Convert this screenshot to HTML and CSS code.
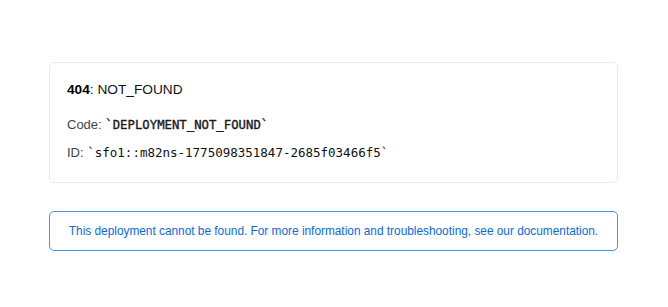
FILE: index.html
```html
<!DOCTYPE html>
<html lang="en">
<head>
<meta charset="utf-8">
<title>404: NOT_FOUND</title>
<link rel="stylesheet" href="styles.css">
</head>
<body>
<main class="page">
  <section class="error-card">
    <p class="title"><strong>404</strong>: NOT_FOUND</p>
    <p class="detail">Code: <code class="code">`DEPLOYMENT_NOT_FOUND`</code></p>
    <p class="detail">ID: <code class="id">`sfo1::m82ns-1775098351847-2685f03466f5`</code></p>
  </section>
  <a class="notice" href="#">This deployment cannot be found. For more information and troubleshooting, see our documentation.</a>
</main>
</body>
</html>
```

FILE: styles.css
```css
html, body {
  margin: 0;
  padding: 0;
  background: #ffffff;
}
body {
  font-family: "Liberation Sans", Arial, sans-serif;
  color: #333;
}
.page {
  display: flex;
  flex-direction: column;
  gap: 28px;
  padding: 62px 50px 0 49px;
}
.error-card {
  border: 1px solid #eaeaea;
  border-radius: 5px;
  padding: 18px 17px 15px;
  display: flex;
  flex-direction: column;
}
.error-card p {
  margin: 0;
}
.title {
  font-size: 13.7px;
  line-height: 18px;
  color: #111;
  margin-bottom: 12px !important;
}
.title strong {
  font-weight: bold;
  color: #000;
}
.detail {
  font-size: 13px;
  line-height: 28px;
  color: #444;
}
code {
  font-family: "DejaVu Sans Mono", "Liberation Mono", monospace;
  font-size: 12.5px;
  color: #111;
}
code.code {
  font-size: 12.3px;
  color: #1a1a1a;
  -webkit-text-stroke: 0.35px #1a1a1a;
}
.notice {
  display: block;
  border: 1px solid #4a92e4;
  border-radius: 5px;
  padding: 11px 10px;
  text-align: center;
  font-size: 11.85px;
  line-height: 16px;
  color: #0a6bd6;
  text-decoration: none;
}
```
